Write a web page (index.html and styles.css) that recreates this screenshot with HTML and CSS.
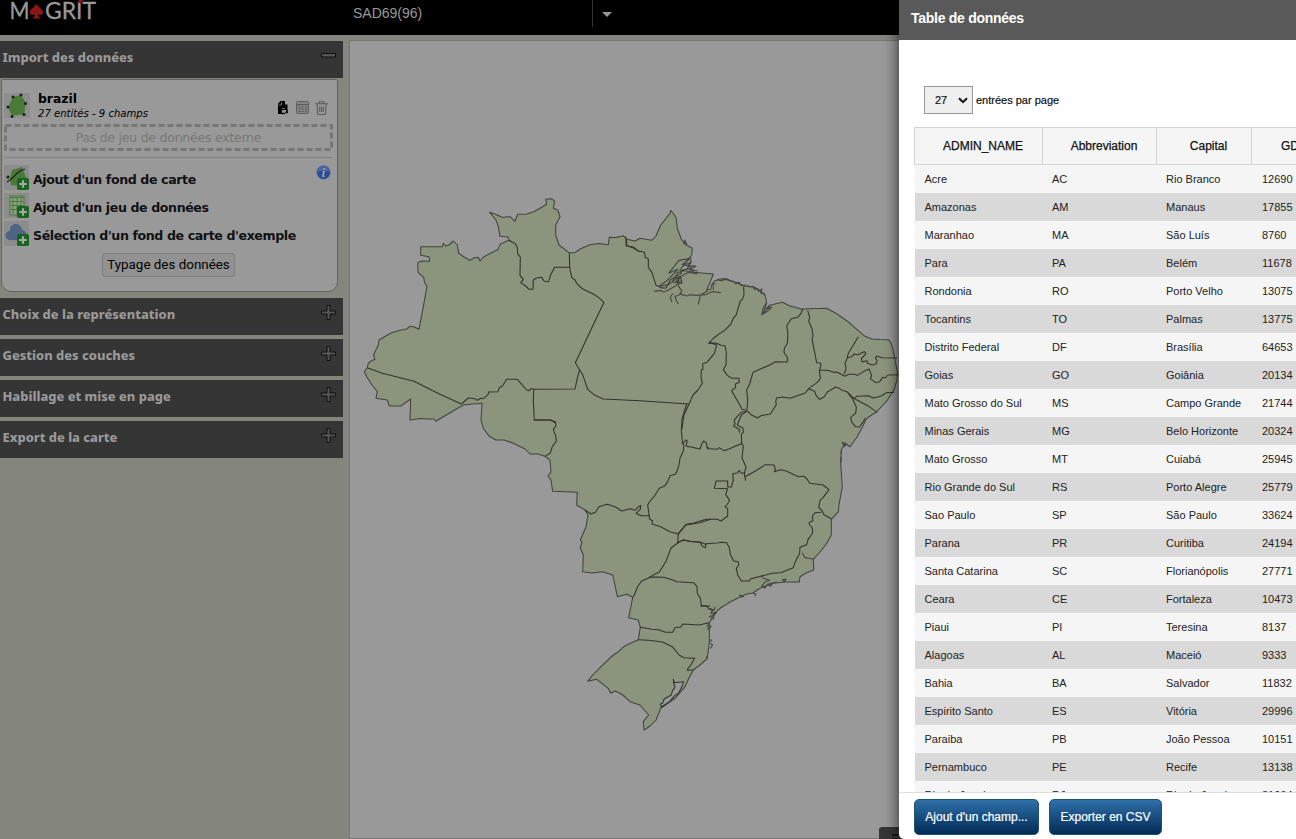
FILE: index.html
```
<!DOCTYPE html>
<html lang="fr">
<head>
<meta charset="utf-8">
<title>Magrit</title>
<link rel="stylesheet" href="styles.css">
</head>
<body>
<svg class="defs" aria-hidden="true">
  <symbol id="plus" viewBox="0 0 15 15"><path d="M6 .5h3V6h5.500v3H9v5.500H6V9H.5V6H6z" fill="#555" stroke="#111"/></symbol>
  <symbol id="add" viewBox="0 0 11 11"><rect width="11" height="11" rx="1.500" fill="#18641f"/><path d="M5.500 2v7M2 5.500h7" stroke="#a5aaa5" stroke-width="2"/></symbol>
</svg>
<div class="app">
  <header class="topbar">
    <svg class="logo" viewBox="0 0 110 27"><text x="9.500" y="19" textLength="20" lengthAdjust="spacingAndGlyphs">M</text><path transform="translate(30 4)" d="M6.500 0C8 3 13 5 13 8.500c0 2.500-3 3.200-5 1.800C8 12 9 13.300 10.500 14.500h-8C4 13.300 5 12 5 10.300 3 11.700 0 11 0 8.500 0 5 5 3 6.500 0z" fill="#8c1616"/><text x="45" y="19" textLength="51" lengthAdjust="spacingAndGlyphs">GRIT</text><path d="M79 0h5l-3 3h-3z" fill="#8c1616"/></svg>
    <div class="projection">SAD69(96)</div>
    <div class="caret-box"><span class="caret"></span></div>
  </header>
  <div class="workspace">
    <aside class="sidebar">
      <section class="head head-open"><h2>Import des données</h2><svg class="minus" viewBox="0 0 15 5"><rect x=".5" y=".5" width="14" height="3.500" fill="#555" stroke="#111"/></svg></section>
      <div class="panel">
        <div class="layer">
          <svg class="layer-icon" viewBox="0 0 26 25"><rect width="26" height="25" fill="#8e8e8e"/><path d="M9 4l8-2 5 8-2 11-12 2-4-9z" fill="#4a7a38"/><g fill="#162018"><circle cx="9" cy="4" r="1.500"/><circle cx="17" cy="2" r="1.500"/><circle cx="21.500" cy="10.500" r="1.500"/><circle cx="20" cy="21.500" r="1.500"/><circle cx="8" cy="23.500" r="1.500"/><circle cx="4" cy="14" r="1.500"/></g></svg>
          <div class="layer-text"><strong>brazil</strong><em>27 entités - 9 champs</em></div>
          <div class="layer-tools">
            <svg width="12" height="14" viewBox="0 0 12 14"><path d="M1 2.500L3.500 0H8v3.500h2.500V9H5v4H1z" fill="#000"/><path d="M8.500 11.500h1.500V9M5 12.500h3" fill="none" stroke="#000" stroke-width="1.700"/><path d="M4.500 1v3H1.500M5 7.500h3" fill="none" stroke="#888" stroke-width=".8"/></svg>
            <svg width="13" height="13" viewBox="0 0 13 13"><rect x=".5" y=".5" width="12" height="12" rx="1" fill="#858585" stroke="#5f5f5f"/><path d="M1 3.500h11M2.500 6h2M5.500 6h2M9 6h2M2.500 8.200h2M5.500 8.200h2M9 8.200h2M2.500 10.500h2M5.500 10.500h2M9 10.500h2" stroke="#5a5a5a"/></svg>
            <svg width="13" height="14" viewBox="0 0 13 14"><path d="M0 2.700h13M4 2.500V.7h5v1.800M2 3l.5 9.500q0 1 1 1h6q1 0 1-1L11 3M4.700 5.500v5.500M6.500 5.500v5.500M8.300 5.500v5.500" fill="none" stroke="#5b5b5b" stroke-width="1.100"/></svg>
          </div>
        </div>
        <svg class="dropzone" viewBox="0 0 329 27"><rect x="1.500" y="1.500" width="326" height="24" fill="none" stroke="#777" stroke-width="3" stroke-dasharray="6 3"/><text x="164.500" y="18" text-anchor="middle" textLength="186">Pas de jeu de données externe</text></svg>
        <hr>
        <ul class="actions">
          <li><svg viewBox="0 0 25 25"><rect width="25" height="25" fill="#8c8c8c"/><path d="M8 5l10-3 2 5 3 9-5 5-11-1-1-7z" fill="#4a7a38"/><path d="M3 17c8-3 8-11 18-13" fill="none" stroke="#182018" stroke-width="1.200"/><circle cx="4" cy="12" r="1.500" fill="#182018"/><use href="#add" x="13" y="13" width="12" height="12"/></svg><span>Ajout d'un fond de carte</span><svg class="info" viewBox="0 0 15 15"><circle cx="7.500" cy="7.500" r="7" fill="#2c4d94" stroke="#7886a5"/><path d="M2 7a5.500 5.500 0 0 1 11 0q-5-3-11 0z" fill="#4d69a3"/><text x="7.500" y="12" text-anchor="middle">i</text></svg></li>
          <li><svg viewBox="0 0 25 25"><rect width="25" height="25" fill="#8c8c8c"/><rect x="6" y="3" width="14" height="19" fill="#8e9f89" stroke="#4a7a38"/><path d="M6 4.500h14M7 8.500h12M7 12.500h12M7 16.500h12M9 5v16M13 5v16M17 5v16" stroke="#4a7a38"/><use href="#add" x="13" y="13" width="12" height="12"/></svg><span>Ajout d'un jeu de données</span></li>
          <li><svg viewBox="0 0 25 25"><rect width="25" height="25" fill="#8c8c8c"/><path d="M6 19a4 4 0 0 1 0-9C5 5 9 3 12 3s6 3 6 6c5 0 7 9 1 10z" fill="#4f6485"/><use href="#add" x="13" y="13" width="12" height="12"/></svg><span>Sélection d'un fond de carte d'exemple</span></li>
        </ul>
        <button class="typing">Typage des données</button>
      </div>
      <section class="head"><h2>Choix de la représentation</h2><svg class="plus"><use href="#plus"/></svg></section>
      <section class="head"><h2>Gestion des couches</h2><svg class="plus"><use href="#plus"/></svg></section>
      <section class="head"><h2>Habillage et mise en page</h2><svg class="plus"><use href="#plus"/></svg></section>
      <section class="head"><h2>Export de la carte</h2><svg class="plus"><use href="#plus"/></svg></section>
    </aside>
    <main class="map">
      <svg class="brazil" viewBox="350 41 946 798">
        <path class="land" d="M364.3 371.700L367.300 367.700 368.300 363.300 371 361 375 359.300 373.500 355 375 351.700 378.300 345 379 340 384 337 391.700 332.700 399 330.500 406.700 329 410 326.300 414.300 327 419 329.300 423.300 306.700 427 286.700 424.500 282 423.700 277.300 418 272.300 417.700 262.700 421.700 261 429.700 261.300 429 256.700 420.700 255.300V246.700H442.300L443.300 243.300 445.700 246 449 245 453.300 241 457.300 245 458.700 253.300 464 257 470 260.300 474 258 478.300 257.300 480 261 484 256.700 491 253 498.300 249.300 500 244.300 509 240.300 508.300 237 500 236.300 498.300 226.700 496 220 489.700 212.300 496.700 214.700 501.700 217.300 510 216.700 515 221.300 517.700 214.300 526.700 214 534 211.700 541.700 207.300 546.700 204 545.700 199.300 551.700 198.700 554.700 201.300 553.300 208.300 557.700 210 560 216.700 555.700 225 555.700 235 559 245 569 252.700 575 252.700 580 249 590 244.700 599 243.500 608.300 244.700 609.300 237.300 616 237.500 623.300 235.700 626.700 239.300 635 241 640 238.300 651.700 240.300 656 236 660.700 225 670 213.300 670.700 210.300 676 217.300 677.300 228.300 681.700 240 685 244 688.300 246 692.300 248.300 691.700 255 686.700 261.700 680 270 693.300 272.300 713.300 274 710.700 280.700 706.700 290 710.700 289.300 712 284 715 280.700 720 279 726.700 278.700 731 281 736.700 282.700 744 286 753.300 286.700 759.300 290 762 293 765 295 766.700 302.700 763.300 313.300 770.700 305 782.300 302.300 790 306 801.700 309 826.700 308.300 837 314 846.700 320.700 864 335.700 871.700 339 880 339.500 888.300 339.700 891 343 892.700 348.300 895 360 897.300 371.700 897 380 894 390 886 402 876 412.300 866.700 418.300 861.700 428.300 857 437 850 446.700 845 443.300 841.300 450 840.700 463.300 842.300 486.700 839 505 838.300 511.700 831.300 519.300V535L827 543 821.700 550 813.300 559.300 813.700 570 806 573 800 576.700 799.300 582 785 582 773.300 583.300 765 586 758.300 589.300 753 593 746.700 594 740.700 596.700 730 602 720 608.300 715 613 712.700 616.700 709.300 623.300V641.700L708 653 706.700 659 700 665 693.300 670 689 678 685 686.700 675 698.300 660.700 708.300 656 720 650 726 644 730 643.300 721.700 648.700 715 640 705 630 701.700 624 696 620 693.300 615 691 610.700 693.300 608.300 688.300 596.700 679.300 587.700 681.300 592.700 675 603.300 664.300 613.300 655 618 652 625 645.700 638.300 639.700 640.300 627.300 638.300 620 628.700 617.700 632.700 597.300 626.700 594.300 617.300 596.700 615 585 612.700 575 602.700 571.700 592 573 582.700 571.700 583.300 555 580.300 548 582 542 580.300 540 586 527 588 515 585 510 576.700 505 577.300 492.300 552.700 491.300 551 480 548 476 551 472 550 460 545 456.300 538 454 530 454 525 449 513.300 443.300 504 440 496 440 489 436 483.300 428.300 481 420 482 403.300 473 404 463.300 405 453 411 443.300 416.700 436 421.300 434 419 428 419 420 418.500 410 420 410.700 399 400.700 406H389.300L387.300 400 376 398.300 377.300 391.700 372 385 366.700 376.700z"/>
        <g transform="translate(360 190) scale(.33333)" class="border">
          <path d="M22 533L67 550 162 574 232 609 304 642 325 624 345 626 352 631 362 625 370 626 384 614 386 606 414 605 418 593 427 588 440 568H472L500 600 508 602 512 596 521 598 645 597 653 560 659 540 646 518 690 425 732 337 715 322 700 312 668 297 650 280 645 270 635 262 629 232 628 188"/>
          <path d="M447 151L467 162 472 173 473 191 481 201 480 256 490 269 482 278 497 288 507 298 519 298 520 270 529 264 545 262 553 274 566 275 572 254 584 232H630"/>
          <path d="M659 540L669 556 683 598 705 616 730 627 840 632 985 642M521 598L520 633 523 690H574L587 700"/>
          <path d="M798 140V166L818 173 838 185"/>
        </g>
        <g transform="translate(620 190) scale(.33333)" class="border">
          <path d="M20 148v20l20 3 13 11 20 5 3 15 9 5v25l11 16 12 38 18 8h12l14-25 30-18 5-10 15-4 12-28"/>
          <path class="coast" d="M102 304l20-3 8 5 10-3 25-14 20-18-5-11 25-13 26 4-25-14 10-8-30-5 27-20-37 8-30 38 28-12-34 35-24 16 30-5 30-23v30l10 11-6 8 6 4 16 4 8-4 18 2 28-2 20-9 26 3M160 311q-14 6-4 25M164 320l20-8M165 317l3 13 7 12M235 343l6-27 22-14M190 243l-18 5-7 15 17-3-12 18 16 2-4-20-17 18-8-3 12-20M197 223l16-5-8 9 23 1-18 11 24 4M194 150l6 12-9-2zM280 300l-1-20 8 3M292 270l14 2 4-4 12 1 10 5 8-1 7 8 10-4 7 10 14-2M380 286l10 5 8-2 6 9 8-2 4 8 10-7-4 12 12 0M440 338l-10 16-5 20 20-12 10-10-17 5 12-12"/>
          <path d="M371 290l1 25-5 13-6 5-13 43-8 8-7 18-20 20-9 5-23 17-15 16 22-1 15 7 12 1 4 22-1 35-8 15 12 17 14 9h21l1 12-12 5 1 10-12 10 14 25 10 17L366 658L381 660"/>
          <path d="M548 357l-5 13-10 12-19 4-14 22 4 22-2 30-9 15-1 12 11 17-1 12-35-1-23 12-45 20-10 35-9 17 3 30-2 30M563 361l6 22-3 10 10 23 3 22-3 8 14 72 13 2-2 15-3 6h24l18 6 10-1 25 13 11-6h17l10 3 22-14 12-5 8 20-4 9 16 12 12-3 9-13 8 2 8-9 32-1 28-7 5 5"/>
          <path d="M715 440l-30 50-4 16-6 13 3 16-5 17M681 503l14-3 8-8 10 2 20-9 5 6-14 15 2 10 15-4 1 8 15 5 12-4 2-10-5-8 5-5 15 5 45 1"/>
          <path d="M598 541l3 25-10 12-16 11-8 6-11 14-20 7-25 9-24-4-17 3-3 10 2 10-18 28-28 5-10 7-20-10-10-10-18 2-13 13-10 13 4 10-6 6 18 10v10"/>
          <path d="M567 597l17 7 4 12 11 12 14-8 9-14 25-15 11 4 8 6 15 4 13 17 8 3 8-6 35-2 15 7 24-6 15-10 24-1M681 605l20 20 42 22 29 20M695 622l10 20 4 10-2 18-15 12 4 16 10 12 12 1 12-16 5-10"/>
          <path d="M266 457L290 465 283 490 263 515 248 522 249 537 244 540 243 560 247 580 234 600 219 615 202 654 192 675 188 702 185 720"/>
        </g>
        <g transform="translate(470 380) scale(.33333)" class="border">
          <path d="M191 120h47l18 5 2 12-8 12 7 18 2 17-12 15-6 20-16 10M650 72L636 117 634 152 638 193 647 180 652 183 648 198 690 207 696 190 700 184 708 187 713 208"/>
          <path d="M642 194L640 212 630 235 627 255 622 270 617 282 600 287 593 305 585 317 568 325 552 350 540 363 533 375 537 404 539 418 548 422 546 432 572 440 600 455 625 462 648 435 690 428 722 418"/>
          <path d="M345 390L363 402 377 396 387 380 412 373 437 381 455 393 480 386 495 391 505 381 512 376 511 388 498 400 513 407H539M625 462L623 489 603 504 588 544 568 576 548 586 536 594 515 603 504 618 490 651"/>
          <path d="M623 489l17-10 15 5 35 2 20 8M536 592l20-1 25 1 25 7 15 6 50 3 10 12 1 20 9 15 2 12 2 11h25"/>
        </g>
        <g transform="translate(670 380) scale(.33333)" class="border">
          <path d="M110 202l10 4 10 1 12 1 5-5 15 9 15-5 20-9 21-8M231 93l-17 12-12 30 17 10 1 12-6 5 1 27 5 10-4 35 12 27-5 19 4 22"/>
          <path d="M224 291l32-18 30-19 26 1 4 12-3 8 18-6 16 3 25 12 15 6 15-1 9 8 8 13 40 5 18 14-18 24-9 8-4 21 10 10 6 12 22 12M226 278L215 280 207 272 202 279 188 281 190 301 184 321H173V303H138L133 325 173 326 167 344 179 361 170 376 165 380 173 386V408L153 423 142 418H108L75 428 48 433 23 463"/>
          <path d="M23 487l20-7 25 5 22 2 7 12 10 4v-12l35-2 13-2 15 1 8 15 3 20 10 20 14 2 1 10-7 10 4 20 11 18h24l3-6 65-17 26-2 38-15 5-16 14-27 1-18 20-8 4-15 14-20-1-15-10-12 2-6 10-3-2-15 9-10 18-1"/>
          <path class="coast" d="M397 518l8 15 25 4M275 585l5 10 19 6-14 5-10 13 10 5 9-12 7 7 6-8M338 599l10-1-5 8zM295 612l26-6M207 645l14 4-8 3M248 639l10 3-4 7M516 187l14 5-7 8zM514 213v10M513 230v18M120 685l12 6 4-10M118 711h14l-4 8"/>
        </g>
        <g transform="translate(570 560) scale(.33333)" class="border">
          <path d="M390 138h20l8 10 10 2-5 10 15-2-8 10M211 202l35 6 20 1 20 8h22l7-14 18-2 5-9 50 3 15-4 15-3M205 239l30 2 42 5 30 14 20 25 15 8 32 2-10 18-10 12-2 6 18-1"/>
          <path class="lagoon" d="M310 358l3 10 28-3-5 14-10 20-12 8-15 18-25 16-3-8 7-4 5-13 20-10 5-15 7-8-4-14z"/>
          <path class="coast" d="M415 192l8 8-8 8-3-14M420 250l8 5-7 10M423 238v8M410 288l4 8M417 170l15-5"/>
        </g>
      </svg>
    </main>
  </div>
  <div class="tab"><svg width="8" height="8" viewBox="0 0 8 8"><path d="M1 2h6M1 6h6" stroke="#0c0c0c" stroke-width="1.500"/></svg></div>
  <div class="modal">
    <div class="modal-head">Table de données</div>
    <div class="modal-body">
      <div class="pager"><span class="select">27<svg viewBox="0 0 10 7"><path d="M1 1.200l4 4 4-4" fill="none" stroke="#111" stroke-width="2"/></svg></span><span>entrées par page</span></div>
      <table>
        <colgroup><col class="c1"><col class="c2"><col class="c3"><col class="c4"></colgroup>
        <thead><tr><th>ADMIN_NAME</th><th>Abbreviation</th><th>Capital</th><th class="gdp">GDP</th></tr></thead>
        <tbody>
          <tr><td>Acre<td>AC<td>Rio Branco<td>12690</tr>
          <tr><td>Amazonas<td>AM<td>Manaus<td>17855</tr>
          <tr><td>Maranhao<td>MA<td>São Luís<td>8760</tr>
          <tr><td>Para<td>PA<td>Belém<td>11678</tr>
          <tr><td>Rondonia<td>RO<td>Porto Velho<td>13075</tr>
          <tr><td>Tocantins<td>TO<td>Palmas<td>13775</tr>
          <tr><td>Distrito Federal<td>DF<td>Brasília<td>64653</tr>
          <tr><td>Goias<td>GO<td>Goiânia<td>20134</tr>
          <tr><td>Mato Grosso do Sul<td>MS<td>Campo Grande<td>21744</tr>
          <tr><td>Minas Gerais<td>MG<td>Belo Horizonte<td>20324</tr>
          <tr><td>Mato Grosso<td>MT<td>Cuiabá<td>25945</tr>
          <tr><td>Rio Grande do Sul<td>RS<td>Porto Alegre<td>25779</tr>
          <tr><td>Sao Paulo<td>SP<td>São Paulo<td>33624</tr>
          <tr><td>Parana<td>PR<td>Curitiba<td>24194</tr>
          <tr><td>Santa Catarina<td>SC<td>Florianópolis<td>27771</tr>
          <tr><td>Ceara<td>CE<td>Fortaleza<td>10473</tr>
          <tr><td>Piaui<td>PI<td>Teresina<td>8137</tr>
          <tr><td>Alagoas<td>AL<td>Maceió<td>9333</tr>
          <tr><td>Bahia<td>BA<td>Salvador<td>11832</tr>
          <tr><td>Espirito Santo<td>ES<td>Vitória<td>29996</tr>
          <tr><td>Paraiba<td>PB<td>João Pessoa<td>10151</tr>
          <tr><td>Pernambuco<td>PE<td>Recife<td>13138</tr>
          <tr><td>Rio de Janeiro<td>RJ<td>Rio de Janeiro<td>31064</tr>
        </tbody>
      </table>
    </div>
    <div class="modal-foot"><button class="b1">Ajout d'un champ...</button><button class="b2">Exporter en CSV</button></div>
  </div>
</div>
</body>
</html>
```
FILE: styles.css
```
* { box-sizing: border-box; }
body { margin: 0; background: #84867e; overflow: hidden; font-family: "Liberation Sans", Arial, sans-serif; }
.defs { position: absolute; width: 0; height: 0; }
.app { position: relative; width: 1296px; height: 839px; overflow: hidden; display: flex; flex-direction: column; }
.topbar { height: 35px; flex: none; background: #000; color: #999; display: flex; align-items: flex-start; }
.logo { width: 110px; height: 27px; margin-right: 243px; }
.logo text { font: 22.500px Lato, sans-serif; fill: #999; stroke: #999; stroke-width: .3; }
.projection { width: 239px; font-size: 14px; line-height: 27px; }
.caret-box { border-left: 1px solid #333; height: 27px; padding: 12px 0 0 9px; }
.caret { display: block; border: 5px solid transparent; border-top-color: #999; border-bottom: 0; }
.workspace { flex: 1; display: flex; min-height: 0; }
.sidebar { width: 349px; padding-top: 6px; display: flex; flex-direction: column; }
.head { width: 343px; height: 37px; margin-bottom: 4px; padding: 0 7px 0 2.500px; flex: none; display: flex; justify-content: space-between; background: #353535; }
.head h2 { margin: 0; font: 800 12.900px/33px "Noto Sans", sans-serif; color: #999; }
.head .plus { width: 15px; height: 15px; margin-top: 7px; }
.head-open { margin-bottom: 1px; }
.minus { width: 15px; height: 5px; margin-top: 12px; }
.panel { width: 337px; height: 213px; margin: 0 0 6px 1px; padding: 10px 5px 0 2px; flex: none; background: #999; border: 1px solid #626460; border-radius: 2px 2px 10px 10px; font-family: "DejaVu Sans", Verdana, sans-serif; }
.layer { display: flex; height: 34px; }
.layer-icon { width: 26px; height: 25px; margin-top: 3px; flex: none; }
.layer-text { margin-left: 8px; flex: 1; display: flex; flex-direction: column; color: #000; }
.layer-text strong { font-size: 12.400px; line-height: 16px; margin-top: 1px; }
.layer-text em { font-size: 10.080px; line-height: 14px; }
.layer-tools { display: flex; gap: 6.500px; padding: 11px 4px 0 0; }
.dropzone { display: block; width: 329px; height: 27px; font-size: 12.500px; }
.dropzone text { fill: #777; }
hr { margin: 6px 0 7px; border: 0; border-top: 1px solid #808080; }
.actions { list-style: none; margin: 0; padding: 0; display: grid; gap: 4px; }
.actions li { display: flex; height: 24px; font-size: 12.600px; font-weight: bold; letter-spacing: -.4px; line-height: 30px; color: #111114; white-space: nowrap; }
.actions svg { width: 25px; height: 25px; margin-right: 4px; flex: none; }
.actions .info { width: 15px; height: 15px; margin: 0 1px 0 auto; }
.info text { font: italic bold 12px "Liberation Serif", serif; letter-spacing: 0; fill: #aaa; }
.typing { display: block; width: 133px; height: 24px; margin: 8px 0 0 98px; padding: 0; border: 1px solid #7e7e7e; border-radius: 3px; background: #929292; color: #000; font: 13.400px/20px Roboto, sans-serif; white-space: nowrap; }
.map { width: 947px; margin-top: 5px; border: 1px solid #777; background: #999; }
.brazil { display: block; width: 946px; height: 798px; }
.land { fill: #8b957d; stroke: #41443d; stroke-width: 1.050; stroke-linejoin: round; }
.border { fill: none; stroke: #30352b; stroke-width: 3.200; stroke-linejoin: round; }
.coast { stroke: #454842; stroke-width: 3.400; }
.lagoon { fill: #999; }
.tab { position: absolute; left: 879px; top: 827px; width: 40px; height: 12px; background: #353535; border-radius: 3px 0 0 0; padding: 6px 0 0 12px; overflow: hidden; line-height: 0; }
.modal { position: absolute; left: 899px; top: 0; width: 420px; height: 839px; background: #fff; border-radius: 0 0 0 5px; box-shadow: 0 0 15px rgba(0, 0, 0, .75); display: flex; flex-direction: column; overflow: hidden; }
.modal-head { height: 40px; flex: none; background: #595959; padding-left: 12px; color: #fff; font-size: 14px; font-weight: bold; line-height: 37px; letter-spacing: -.27px; }
.modal-body { flex: 1; min-height: 0; overflow: hidden; padding: 46px 0 0 15px; }
.pager { display: flex; gap: 3px; padding-left: 10px; height: 41px; font-size: 11px; line-height: 29px; color: #111; -webkit-text-stroke: .2px #111; }
.select { display: flex; width: 49px; height: 28px; border: 1px solid #999; background: #efefef; padding-left: 10px; line-height: 27px; }
.select svg { width: 10px; height: 7px; margin: 10px 0 0 11px; }
table { width: 424px; table-layout: fixed; border-collapse: separate; border-spacing: 0; color: #222; font-size: 11px; }
.c1 { width: 129px; }
.c2 { width: 114px; }
.c3 { width: 95px; }
.c4 { width: 86px; }
th { height: 38px; padding: 0 9px 0 18px; border: 1px solid #d3d3d3; border-left: 0; background: #f5f5f5; font-size: 12px; font-weight: normal; color: #111; -webkit-text-stroke: .25px #111; }
th:first-child { border-left: 1px solid #d3d3d3; }
th.gdp { text-align: left; padding-left: 29px; }
td { height: 28px; padding: 0 0 0 9px; background: #f5f5f5; white-space: nowrap; }
td:last-child { padding-left: 10px; }
td:first-child { border-left: 1px solid #fff; padding-left: 9.500px; }
tbody tr:nth-child(even) td { background: #d9d9d9; }
.modal-foot { height: 47px; flex: none; display: flex; gap: 10px; padding: 6px 0 0 15px; border-top: 1px solid #ddd; }
.modal-foot button { height: 36px; padding: 0; border: 1px solid #1d526c; border-radius: 5px; background: linear-gradient(#2e70aa, #022b55); color: #fff; font: 12px "Liberation Sans", Arial, sans-serif; -webkit-text-stroke: .2px #fff; }
.b1 { width: 125px; }
.b2 { width: 113px; }
```
